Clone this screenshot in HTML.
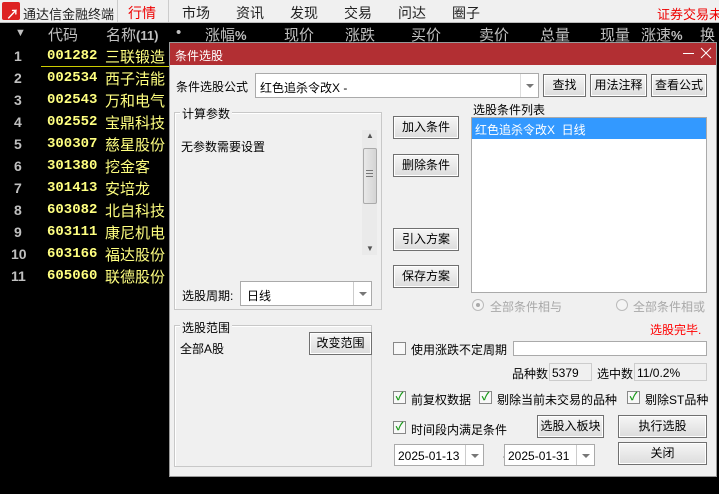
<!DOCTYPE html>
<html><head><meta charset="utf-8"><style>
*{margin:0;padding:0;box-sizing:border-box}
body{width:719px;height:494px;background:#000;position:relative;overflow:hidden;font-family:"Liberation Sans","Noto Sans CJK SC",sans-serif;font-size:12px;color:#000}
.a{position:absolute;white-space:nowrap}
.menu{left:0;top:0;width:719px;height:23px;background:#f0f0f0;border-bottom:1px solid #bbb}
.m{position:absolute;top:3px;font-size:14px;color:#222}
.hd{color:#c0c0c0;font-size:15px;top:24px}
.num{color:#c0c0c0;font-size:14px;font-weight:bold}
.code{color:#ffff80;font-size:14px;font-weight:bold;font-family:"Liberation Mono","Liberation Sans",monospace}
.nm{color:#ffff80;font-size:15px}
.dlg{left:169px;top:42px;width:548px;height:435px;background:#f0f0f0;border:1px solid #999}
.tb{left:170px;top:43px;width:546px;height:22px;background:#b22f33}
.btn{position:absolute;border:1px solid #707070;background:linear-gradient(#f6f6f6,#dcdcdc);text-align:center;font-size:12px;line-height:21px;box-shadow:inset 0 0 0 1px #fff}
.box{position:absolute;background:#fff;border:1px solid #aaa}
.grp{position:absolute;border:1px solid #c8c8c8;box-shadow:inset 1px 1px 0 #fff}
.gl{position:absolute;background:#f0f0f0;padding:0 2px;font-size:12px}
.dd{position:absolute;right:0;top:0;bottom:0;width:18px;border-left:1px solid #ccc}
.dd:after{content:"";position:absolute;left:5px;top:45%;border:4px solid transparent;border-top:4px solid #777}
.cb{position:absolute;width:13px;height:13px;border:1px solid #888;background:#f8f8f8;color:#1a9a1a;font-size:11px;line-height:11px;text-align:center;font-weight:bold}
</style></head><body>
<div class="a menu">
<div class="a" style="left:2px;top:2px;width:18px;height:18px;background:#d22;border-radius:2px"></div>
<div class="a" style="left:6px;top:4px;color:#fff;font-size:13px;font-weight:bold">↗</div>
<div class="m" style="left:23px;font-size:13px;top:4px">通达信金融终端</div>
<div class="a" style="left:117px;top:0;width:1px;height:22px;background:#ccc"></div>
<div class="m" style="left:128px;color:#e00">行情</div>
<div class="a" style="left:168px;top:0;width:1px;height:22px;background:#ccc"></div>
<div class="m" style="left:182px">市场</div>
<div class="m" style="left:236px">资讯</div>
<div class="m" style="left:290px">发现</div>
<div class="m" style="left:344px">交易</div>
<div class="m" style="left:398px">问达</div>
<div class="m" style="left:452px">圈子</div>
<div class="m" style="left:657px;color:#e00;font-size:13px;top:4px">证券交易未</div>
</div>
<div class="a hd" style="left:15px;top:27px;font-size:11px">▼</div>
<div class="a hd" style="left:48px">代码</div>
<div class="a hd" style="left:106px">名称<b style="font-size:13px">(11)</b></div>
<div class="a hd" style="left:176px">•</div>
<div class="a hd" style="left:205px">涨幅<b style="font-size:13px">%</b></div>
<div class="a hd" style="left:284px">现价</div>
<div class="a hd" style="left:345px">涨跌</div>
<div class="a hd" style="left:411px">买价</div>
<div class="a hd" style="left:479px">卖价</div>
<div class="a hd" style="left:540px">总量</div>
<div class="a hd" style="left:600px">现量</div>
<div class="a hd" style="left:641px">涨速<b style="font-size:13px">%</b></div>
<div class="a hd" style="left:700px">换</div>
<div class="a" style="left:41px;top:66px;width:130px;height:1px;background:#cc0"></div>
<div class="a num" style="left:14px;top:48px">1</div><div class="a code" style="left:47px;top:48px">001282</div><div class="a nm" style="left:105px;top:46px">三联锻造</div>
<div class="a num" style="left:14px;top:70px">2</div><div class="a code" style="left:47px;top:70px">002534</div><div class="a nm" style="left:105px;top:68px">西子洁能</div>
<div class="a num" style="left:14px;top:92px">3</div><div class="a code" style="left:47px;top:92px">002543</div><div class="a nm" style="left:105px;top:90px">万和电气</div>
<div class="a num" style="left:14px;top:114px">4</div><div class="a code" style="left:47px;top:114px">002552</div><div class="a nm" style="left:105px;top:112px">宝鼎科技</div>
<div class="a num" style="left:14px;top:136px">5</div><div class="a code" style="left:47px;top:136px">300307</div><div class="a nm" style="left:105px;top:134px">慈星股份</div>
<div class="a num" style="left:14px;top:158px">6</div><div class="a code" style="left:47px;top:158px">301380</div><div class="a nm" style="left:105px;top:156px">挖金客</div>
<div class="a num" style="left:14px;top:180px">7</div><div class="a code" style="left:47px;top:180px">301413</div><div class="a nm" style="left:105px;top:178px">安培龙</div>
<div class="a num" style="left:14px;top:202px">8</div><div class="a code" style="left:47px;top:202px">603082</div><div class="a nm" style="left:105px;top:200px">北自科技</div>
<div class="a num" style="left:14px;top:224px">9</div><div class="a code" style="left:47px;top:224px">603111</div><div class="a nm" style="left:105px;top:222px">康尼机电</div>
<div class="a num" style="left:11px;top:246px">10</div><div class="a code" style="left:47px;top:246px">603166</div><div class="a nm" style="left:105px;top:244px">福达股份</div>
<div class="a num" style="left:11px;top:268px">11</div><div class="a code" style="left:47px;top:268px">605060</div><div class="a nm" style="left:105px;top:266px">联德股份</div>

<div class="a dlg"></div>
<div class="a tb"></div>
<div class="a" style="left:175px;top:47px;color:#fff;font-size:12px">条件选股</div>
<div class="a" style="left:683px;top:53px;width:11px;height:1px;background:#fff"></div>
<svg class="a" style="left:700px;top:47px" width="12" height="12"><path d="M1 1L11 11M11 1L1 11" stroke="#fff" stroke-width="1"/></svg>

<div class="a" style="left:176px;top:78px">条件选股公式</div>
<div class="box" style="left:255px;top:73px;width:284px;height:25px"><span class="a" style="left:4px;top:5px">红色追杀令改X -</span><div class="dd" style="border-left:1px solid #ddd"></div></div>
<div class="btn" style="left:543px;top:74px;width:43px;height:23px">查找</div>
<div class="btn" style="left:590px;top:74px;width:57px;height:23px">用法注释</div>
<div class="btn" style="left:651px;top:74px;width:56px;height:23px">查看公式</div>

<div class="grp" style="left:174px;top:112px;width:208px;height:198px"></div>
<div class="gl" style="left:180px;top:105px">计算参数</div>
<div class="a" style="left:181px;top:138px">无参数需要设置</div>
<div class="a" style="left:362px;top:130px;width:15px;height:125px;background:#eaeaea"></div>
<div class="a" style="left:366px;top:131px;font-size:8px;color:#555">▲</div>
<div class="a" style="left:366px;top:244px;font-size:8px;color:#555">▼</div>
<div class="a" style="left:363px;top:148px;width:14px;height:56px;background:linear-gradient(90deg,#e8e8e8,#d4d4d4);border:1px solid #aaa;border-radius:2px"></div>
<div class="a" style="left:366px;top:170px;width:7px;height:7px;border-top:1px solid #777;border-bottom:1px solid #777"></div>
<div class="a" style="left:366px;top:173px;width:7px;height:1px;background:#777"></div>
<div class="a" style="left:182px;top:287px">选股周期:</div>
<div class="box" style="left:240px;top:281px;width:132px;height:25px"><span class="a" style="left:6px;top:5px">日线</span><div class="dd"></div></div>

<div class="btn" style="left:393px;top:116px;width:66px;height:23px">加入条件</div>
<div class="btn" style="left:393px;top:154px;width:66px;height:23px">删除条件</div>
<div class="btn" style="left:393px;top:228px;width:66px;height:23px">引入方案</div>
<div class="btn" style="left:393px;top:265px;width:66px;height:23px">保存方案</div>

<div class="a" style="left:473px;top:101px">选股条件列表</div>
<div class="box" style="left:471px;top:117px;width:236px;height:176px"></div>
<div class="a" style="left:472px;top:118px;width:234px;height:21px;background:#3399ff;color:#fff;padding:3px 0 0 3px">红色追杀令改X&nbsp;&nbsp;日线</div>
<div class="a" style="left:472px;top:299px;width:12px;height:12px;border:1px solid #bbb;border-radius:50%;background:#f4f4f4"></div>
<div class="a" style="left:476px;top:303px;width:4px;height:4px;border-radius:50%;background:#aaa"></div>
<div class="a" style="left:490px;top:298px;color:#a8a8a8">全部条件相与</div>
<div class="a" style="left:616px;top:299px;width:12px;height:12px;border:1px solid #bbb;border-radius:50%;background:#f4f4f4"></div>
<div class="a" style="left:633px;top:298px;color:#a8a8a8">全部条件相或</div>
<div class="a" style="left:650px;top:321px;color:#f00">选股完毕.</div>

<div class="grp" style="left:174px;top:325px;width:198px;height:142px"></div>
<div class="gl" style="left:180px;top:319px">选股范围</div>
<div class="a" style="left:180px;top:340px">全部A股</div>
<div class="btn" style="left:309px;top:332px;width:63px;height:23px">改变范围</div>

<div class="cb" style="left:393px;top:342px"></div>
<div class="a" style="left:411px;top:341px">使用涨跌不定周期</div>
<div class="box" style="left:513px;top:341px;width:194px;height:15px"></div>
<div class="a" style="left:512px;top:365px">品种数</div>
<div class="a" style="left:549px;top:363px;width:43px;height:18px;border:1px solid #ccc;padding:2px 0 0 2px">5379</div>
<div class="a" style="left:597px;top:365px">选中数</div>
<div class="a" style="left:634px;top:363px;width:73px;height:18px;border:1px solid #ccc;padding:2px 0 0 2px">11/0.2%</div>

<div class="cb" style="left:393px;top:391px">✓</div><div class="a" style="left:411px;top:391px">前复权数据</div>
<div class="cb" style="left:479px;top:391px">✓</div><div class="a" style="left:497px;top:391px">剔除当前未交易的品种</div>
<div class="cb" style="left:627px;top:391px">✓</div><div class="a" style="left:645px;top:391px">剔除ST品种</div>
<div class="cb" style="left:393px;top:421px">✓</div><div class="a" style="left:411px;top:421px">时间段内满足条件</div>
<div class="btn" style="left:537px;top:415px;width:67px;height:23px">选股入板块</div>
<div class="btn" style="left:618px;top:415px;width:89px;height:23px">执行选股</div>
<div class="btn" style="left:618px;top:442px;width:89px;height:23px">关闭</div>
<div class="box" style="left:394px;top:444px;width:90px;height:22px"><span class="a" style="left:3px;top:4px;font-size:12px">2025-01-13</span><div class="dd"></div></div>
<div class="a" style="left:503px;top:449px">-</div>
<div class="box" style="left:504px;top:444px;width:91px;height:22px"><span class="a" style="left:3px;top:4px;font-size:12px">2025-01-31</span><div class="dd"></div></div>
</body></html>
